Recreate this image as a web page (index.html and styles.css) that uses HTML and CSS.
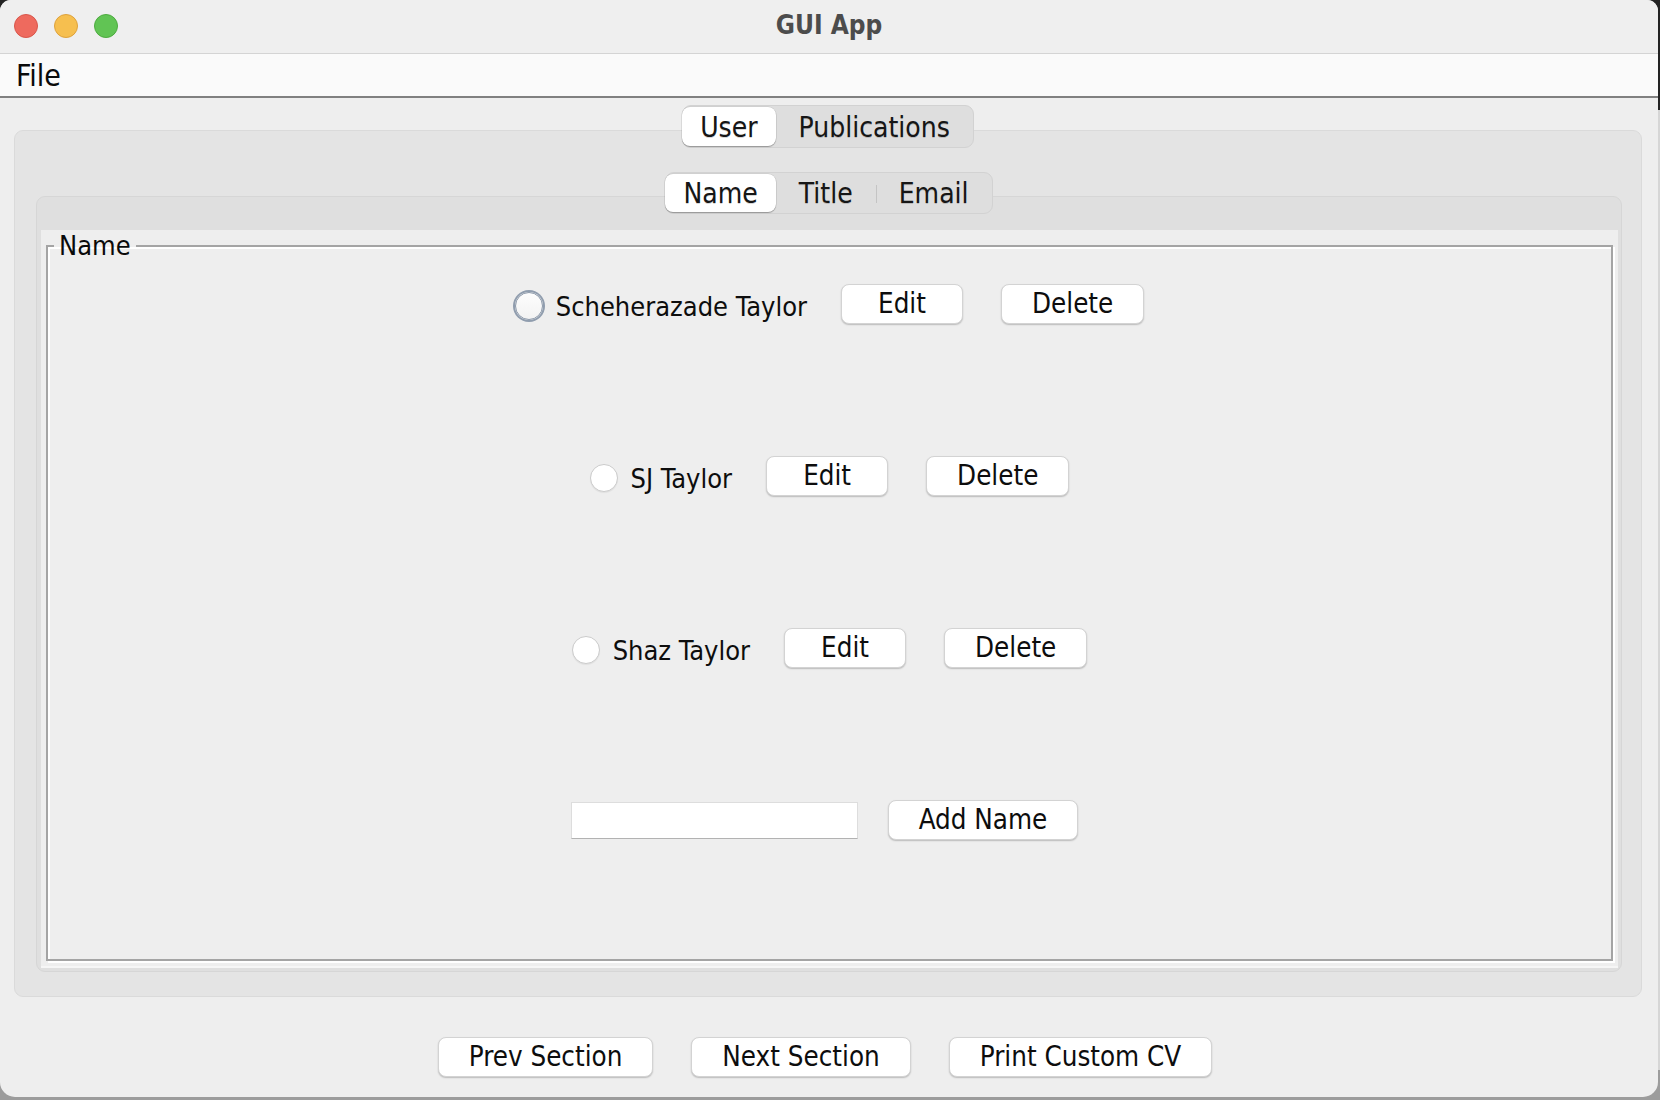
FILE: index.html
```html
<!DOCTYPE html>
<html lang="en">
<head>
<meta charset="utf-8">
<title>GUI App</title>
<link rel="stylesheet" href="styles.css">
</head>
<body>
<div class="window">
  <header class="titlebar">
    <div class="lights">
      <span class="light red"></span>
      <span class="light yellow"></span>
      <span class="light green"></span>
    </div>
    <div class="title">GUI App</div>
    <div class="spacer"></div>
  </header>
  <nav class="menubar"><span class="menu">File</span></nav>

  <main class="main">
    <div class="tabs">
      <div class="seg">
        <span class="seg-item active">User</span>
        <span class="seg-item">Publications</span>
      </div>
      <div class="pane outer-pane">
        <div class="seg">
          <span class="seg-item active">Name</span>
          <span class="seg-item">Title</span>
          <span class="seg-item">Email</span>
        </div>
        <div class="pane inner-pane">
          <div class="content">
            <fieldset class="group">
              <legend>Name</legend>
              <div class="rows">
                <div class="row">
                  <label class="choice"><span class="radio focused"></span><span>Scheherazade Taylor</span></label>
                  <button class="btn">Edit</button>
                  <button class="btn">Delete</button>
                </div>
                <div class="row">
                  <label class="choice"><span class="radio"></span><span>SJ Taylor</span></label>
                  <button class="btn">Edit</button>
                  <button class="btn">Delete</button>
                </div>
                <div class="row">
                  <label class="choice"><span class="radio"></span><span>Shaz Taylor</span></label>
                  <button class="btn">Edit</button>
                  <button class="btn">Delete</button>
                </div>
                <div class="row row-add">
                  <input class="field" type="text" value="">
                  <button class="btn">Add Name</button>
                </div>
              </div>
            </fieldset>
          </div>
        </div>
      </div>
    </div>

    <footer class="footer">
      <button class="btn">Prev Section</button>
      <button class="btn">Next Section</button>
      <button class="btn">Print Custom CV</button>
    </footer>
  </main>
</div>
</body>
</html>
```

FILE: styles.css
```css
* {
  box-sizing: border-box;
}

html, body {
  margin: 0;
  padding: 0;
}

body {
  width: 1660px;
  height: 1100px;
  overflow: hidden;
  background: linear-gradient(to bottom, #232323 0, #232323 110px, #d6d6d6 110px, #d6d6d6 1070px, #9c9c9c 1070px);
  font-family: "DejaVu Sans Condensed", "DejaVu Sans", sans-serif;
  font-stretch: condensed;
  color: #111;
}

.window {
  width: 1658px;
  height: 1097px;
  background: #eeeeee;
  border-radius: 11px 11px 15px 15px;
  overflow: hidden;
  display: flex;
  flex-direction: column;
}

/* Title bar */
.titlebar {
  height: 54px;
  flex: none;
  background: #efefef;
  border-bottom: 1px solid #d4d4d4;
  display: grid;
  grid-template-columns: 1fr auto 1fr;
  align-items: center;
}

.lights {
  display: flex;
  gap: 16px;
  padding-left: 14px;
  padding-bottom: 1px;
}

.light {
  width: 24px;
  height: 24px;
  border-radius: 50%;
  display: block;
}

.red { background: #ee6a5e; border: 1px solid #d9564b; }
.yellow { background: #f6bf4f; border: 1px solid #dea23c; }
.green { background: #61c454; border: 1px solid #4dab3f; }

.title {
  font-size: 26px;
  font-weight: bold;
  color: #4c4c4c;
  padding-bottom: 4px;
}

/* Menu bar */
.menubar {
  height: 44px;
  flex: none;
  background: #fafafa;
  border-bottom: 2px solid #808080;
  padding: 2px 0 0 16px;
  font-size: 30px;
  line-height: 40px;
  color: #0a0a0a;
}

/* Main area */
.main {
  flex: 1;
  display: flex;
  flex-direction: column;
}

.tabs {
  margin: 7px 16px 0 14px;
  display: flex;
  flex-direction: column;
  align-items: center;
}

.seg {
  position: relative;
  z-index: 1;
  display: flex;
  height: 43px;
  background: #dedede;
  border: 1px solid #d2d2d2;
  border-radius: 9px;
  font-size: 28px;
}

.outer-pane > .seg {
  height: 42px;
}

.seg-item {
  display: flex;
  align-items: center;
  padding: 1px 23px 0;
  color: #161616;
  text-shadow: 0 1px 0 rgba(0, 0, 0, 0.18);
  position: relative;
}

.seg-item.active {
  padding: 1px 18px 0;
  margin: 1px 0 1px -1px;
  background: #ffffff;
  border-radius: 8px;
  box-shadow: 0 1px 1px rgba(0, 0, 0, 0.28), 0 0 0 0.5px rgba(0, 0, 0, 0.12);
}

.seg-item:not(.active) + .seg-item:not(.active)::before {
  content: "";
  position: absolute;
  left: 0;
  top: 12px;
  height: 18px;
  border-left: 1px solid #c4c4c4;
}

.pane {
  align-self: stretch;
  margin-top: -18px;
  border-radius: 9px;
}

.outer-pane {
  height: 867px;
  background: #e4e4e4;
  border: 1px solid #dadada;
  padding: 41px 19px 24px 21px;
  display: flex;
  flex-direction: column;
  align-items: center;
}

.inner-pane {
  flex: 1;
  background: #dfdfdf;
  border: 1px solid #d6d6d6;
  padding: 33px 3px 5px 4px;
  display: flex;
}

.content {
  flex: 1;
  background: #eeeeee;
  display: flex;
  flex-direction: column;
  box-shadow: 0 2px 0 #f6f6f6;
}

/* Titled (etched) border */
.group {
  flex: 1;
  margin: 0 5px 5px 5px;
  padding: 22px 0 0 0;
  min-width: 0;
  border: 2px solid #a4a4a4;
  box-shadow: 2px 2px 0 #ffffff, inset 2px 2px 0 #ffffff;
}

.group legend {
  margin-left: 6px;
  padding: 0 5px;
  font-size: 27px;
  line-height: 32px;
  color: #0a0a0a;
}

.rows {
  display: flex;
  flex-direction: column;
  gap: 132px;
}

.row {
  height: 40px;
  display: flex;
  align-items: center;
  justify-content: center;
  font-size: 27px;
}

.choice {
  display: flex;
  align-items: center;
  gap: 13px;
  margin-right: 34px;
  color: #0d0d0d;
  padding-top: 4px;
}

.radio {
  display: block;
  width: 28px;
  height: 28px;
  border-radius: 50%;
  background: #ffffff;
  border: 1px solid #cbcbcb;
  box-shadow: 0 1px 1px rgba(0, 0, 0, 0.06);
}

.radio.focused {
  border: 1px solid #8c99aa;
  box-shadow: 0 0 0 2px #909dae;
  background: linear-gradient(#fdfdfd, #f3f3f3);
}

.btn {
  height: 40px;
  min-width: 122px;
  padding: 0 30px 3px;
  background: #ffffff;
  border: 1px solid #d3d3d3;
  border-radius: 8px;
  box-shadow: 0 1px 1.5px rgba(0, 0, 0, 0.22);
  font-family: inherit;
  font-stretch: condensed;
  font-size: 27.5px;
  color: #0d0d0d;
}

.btn + .btn {
  margin-left: 38px;
}

.row-add {
  gap: 30px;
  padding-right: 10px;
}

.field {
  width: 287px;
  height: 37px;
  background: #ffffff;
  border: 1px solid #dddddd;
  border-bottom-color: #b2b2b2;
  border-radius: 0;
  padding: 0 6px;
  font-family: inherit;
  font-size: 24px;
  outline: none;
}

/* Bottom buttons */
.footer {
  margin-top: 40px;
  display: flex;
  justify-content: center;
  padding-right: 8px;
}
```
